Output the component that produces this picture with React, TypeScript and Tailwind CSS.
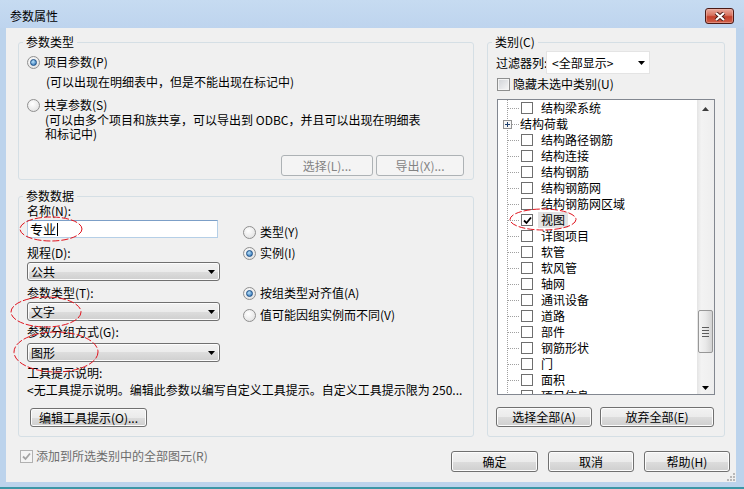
import type { ReactNode } from "react";

const btnFace =
  "rounded-[3px] border border-[#707070] bg-[linear-gradient(#f2f2f2_0%,#ebebeb_50%,#dddddd_50%,#cfcfcf_100%)] shadow-[inset_0_0_0_1px_#fcfcfc]";

function DownArrow() {
  return (
    <svg width="7" height="4" viewBox="0 0 7 4">
      <polygon points="0,0 7,0 3.5,4" fill="#000" />
    </svg>
  );
}

function Btn({
  children,
  w,
  h = 21,
  disabled,
}: {
  children: ReactNode;
  w: string;
  h?: number;
  disabled?: boolean;
}) {
  return (
    <div
      className={`flex items-center justify-center whitespace-nowrap ${w} ${
        h === 21 ? "h-[21px]" : h === 20 ? "h-[20px]" : "h-[19px]"
      } ${
        disabled
          ? "rounded-[3px] border border-[#adb2b5] bg-[#f4f4f4] text-[#838383]"
          : btnFace
      }`}
    >
      {children}
    </div>
  );
}

function Radio({ checked, children }: { checked?: boolean; children: ReactNode }) {
  return (
    <div className="flex h-[16px] items-center gap-[4px] whitespace-nowrap">
      <span className="flex h-[13px] w-[13px] items-center justify-center rounded-full border border-[#8f8f8f] bg-[radial-gradient(circle_at_40%_35%,#ffffff,#dcdcdc)]">
        {checked && (
          <span className="h-[7px] w-[7px] rounded-full border border-[#1c4f86] bg-[radial-gradient(circle_at_40%_35%,#b8e2fb,#1d64ad)]" />
        )}
      </span>
      <span>{children}</span>
    </div>
  );
}

function Combo({ value, mt }: { value: string; mt: string }) {
  return (
    <div
      className={`${mt} flex h-[19px] w-[193px] items-center justify-between pl-[3px] pr-[4px] ${btnFace}`}
    >
      <span className="leading-[15px]">{value}</span>
      <DownArrow />
    </div>
  );
}

function Check({ on, disabled }: { on?: boolean; disabled?: boolean }) {
  return (
    <span
      className={`flex h-[13px] w-[13px] items-center justify-center border ${
        disabled
          ? "border-[#b1b1b1] bg-[#f4f4f4]"
          : "border-[#8e8f8f] bg-[linear-gradient(135deg,#cfd2d6,#f7f7f7)] shadow-[inset_0_0_0_1px_#f4f4f4]"
      }`}
    >
      {on && (
        <svg width="9" height="9" viewBox="0 0 9 9">
          <path d="M1 4.5 L3.5 7 L8 1.5" fill="none" stroke={disabled ? "#a3a3a3" : "#000"} strokeWidth="1.8" />
        </svg>
      )}
    </span>
  );
}

type Item = { label: string; plus?: boolean; on?: boolean; sel?: boolean };

const items: Item[] = [
  { label: "结构梁系统" },
  { label: "结构荷载", plus: true },
  { label: "结构路径钢筋" },
  { label: "结构连接" },
  { label: "结构钢筋" },
  { label: "结构钢筋网" },
  { label: "结构钢筋网区域" },
  { label: "视图", on: true, sel: true },
  { label: "详图项目" },
  { label: "软管" },
  { label: "软风管" },
  { label: "轴网" },
  { label: "通讯设备" },
  { label: "道路" },
  { label: "部件" },
  { label: "钢筋形状" },
  { label: "门" },
  { label: "面积" },
  { label: "项目信息" },
];

function TreeRow({ item }: { item: Item }) {
  return (
    <div className="flex h-[16px] shrink-0 items-center whitespace-nowrap">
      <svg width="22" height="16" viewBox="0 0 22 16" className="shrink-0">
        <line x1="9.5" y1="0" x2="9.5" y2="16" stroke="#a0a0a0" strokeDasharray="1 1" />
        {item.plus ? (
          <>
            <rect x="5.5" y="4.5" width="8" height="8" fill="#f6f6f6" stroke="#919191" />
            <line x1="7" y1="8.5" x2="12" y2="8.5" stroke="#1d3f6e" />
            <line x1="9.5" y1="6" x2="9.5" y2="11" stroke="#1d3f6e" />
            <line x1="14" y1="8.5" x2="22" y2="8.5" stroke="#a0a0a0" strokeDasharray="1 1" />
          </>
        ) : (
          <line x1="10" y1="8.5" x2="22" y2="8.5" stroke="#a0a0a0" strokeDasharray="1 1" />
        )}
      </svg>
      {item.plus ? (
        <span>{item.label}</span>
      ) : (
        <>
          <span className="ml-[1px] flex h-[12px] w-[12px] items-center justify-center border border-[#6f6f6f] bg-white">
            {item.on && (
              <svg width="9" height="9" viewBox="0 0 9 9">
                <path d="M1 4.5 L3.5 7 L8 1.5" fill="none" stroke="#000" strokeWidth="1.8" />
              </svg>
            )}
          </span>
          <span className={`ml-[5px] h-full px-[3px] ${item.sel ? "bg-[#e3e3e3]" : ""}`}>
            {item.label}
          </span>
        </>
      )}
    </div>
  );
}

function Scrollbar() {
  return (
    <div className="flex w-[17px] shrink-0 flex-col bg-[linear-gradient(to_right,#e4e4e4,#f3f3f3_25%,#eeeeee)]">
      <div className="flex h-[17px] items-center justify-center">
        <svg width="7" height="4" viewBox="0 0 7 4">
          <polygon points="0,4 7,4 3.5,0" fill="#3c3c3c" />
        </svg>
      </div>
      <div className="flex-1">
        <div className="mx-[1px] mt-[193px] flex h-[43px] flex-col items-center justify-center gap-[2px] rounded-[2px] border border-[#979797] bg-[linear-gradient(to_right,#f4f4f4,#e9e9e9_50%,#d3d3d3)]">
          <span className="h-[1px] w-[7px] bg-[#5c5c5c]" />
          <span className="h-[1px] w-[7px] bg-[#5c5c5c]" />
          <span className="h-[1px] w-[7px] bg-[#5c5c5c]" />
          <span className="h-[1px] w-[7px] bg-[#5c5c5c]" />
        </div>
      </div>
      <div className="flex h-[17px] items-center justify-center pt-[4px]">
        <DownArrow />
      </div>
    </div>
  );
}

export default function App() {
  return (
    <div className="relative h-[489px] w-[744px] overflow-hidden bg-[#bcd3ec] font-['Noto_Sans_CJK_SC','Noto_Sans',sans-serif] text-[12px] leading-[16px] text-black">
      {/* title bar */}
      <div className="flex h-[28px] items-center justify-between bg-[linear-gradient(#c6dbf1,#bed4ee)] pl-[10px] pr-[10px]">
        <span className="pt-[4px]">参数属性</span>
        <div className="mt-[4px] flex h-[16px] w-[29px] items-center justify-center rounded-[3px] border border-[#4a1a16] bg-[linear-gradient(#e9a99c_0%,#d7725f_45%,#c4402b_55%,#d0604a_100%)] shadow-[inset_0_0_0_1px_#f0b9ae80]">
          <svg width="12" height="9" viewBox="0 0 12 9">
            <path d="M2 1 L10 8 M10 1 L2 8" stroke="#4a1a16" strokeWidth="4" />
            <path d="M2 1 L10 8 M10 1 L2 8" stroke="#fff" strokeWidth="2.2" />
          </svg>
        </div>
      </div>

      {/* client area */}
      <div className="relative ml-[6px] mr-[8px] h-[454px] bg-[#f0f0f0] pt-[7px]">
        <div className="flex gap-[13px] pl-[12px] pr-[11px]">
          {/* left column */}
          <div className="flex w-[456px] flex-col">
            <fieldset className="h-[145px] rounded-[3px] border border-[#d5dfe5]">
              <legend className="ml-[4px] px-[3px] leading-[14px]">参数类型</legend>
              <div className="mt-[5px] pl-[8px]">
                <Radio checked>项目参数(P)</Radio>
              </div>
              <div className="mt-[4px] h-[16px] pl-[27px]">(可以出现在明细表中，但是不能出现在标记中)</div>
              <div className="mt-[7px] pl-[8px]">
                <Radio>共享参数(S)</Radio>
              </div>
              <div className="pl-[26px] leading-[14px]">
                <div>(可以由多个项目和族共享，可以导出到 ODBC，并且可以出现在明细表</div>
                <div>和标记中)</div>
              </div>
              <div className="mt-[14px] flex justify-end gap-[3px] pr-[9px]">
                <Btn w="w-[92px]" disabled>
                  选择(L)...
                </Btn>
                <Btn w="w-[88px]" disabled>
                  导出(X)...
                </Btn>
              </div>
            </fieldset>

            <fieldset className="mt-[9px] h-[248px] rounded-[3px] border border-[#d5dfe5]">
              <legend className="ml-[4px] px-[3px] leading-[14px]">参数数据</legend>
              <div className="flex pl-[8px]">
                <div className="w-[193px]">
                  <div className="h-[16px]">名称(N):</div>
                  <div className="mt-[1px] flex h-[18px] w-[191px] items-center border border-[#b5cfe7] border-t-[#7c9fc7] bg-white pl-[2px] text-[13px]">
                    <span className="leading-[16px]">专业</span>
                    <span className="ml-[1px] h-[13px] w-[1px] bg-black" />
                  </div>
                  <div className="mt-[7px] h-[16px]">规程(D):</div>
                  <Combo value="公共" mt="mt-[1px]" />
                  <div className="mt-[4px] h-[16px]">参数类型(T):</div>
                  <Combo value="文字" mt="mt-[1px]" />
                  <div className="mt-[3px] h-[16px]">参数分组方式(G):</div>
                  <Combo value="图形" mt="mt-[3px]" />
                </div>
                <div className="ml-[23px]">
                  <div className="mt-[21px]">
                    <Radio>类型(Y)</Radio>
                  </div>
                  <div className="mt-[5px]">
                    <Radio checked>实例(I)</Radio>
                  </div>
                  <div className="mt-[24px]">
                    <Radio checked>按组类型对齐值(A)</Radio>
                  </div>
                  <div className="mt-[6px]">
                    <Radio>值可能因组实例而不同(V)</Radio>
                  </div>
                </div>
              </div>
              <div className="mt-[3px] h-[16px] pl-[8px]">工具提示说明:</div>
              <div className="mt-[1px] h-[16px] whitespace-nowrap pl-[8px]">
                &lt;无工具提示说明。编辑此参数以编写自定义工具提示。自定义工具提示限为 250...
              </div>
              <div className="ml-[11px] mt-[10px] w-[117px]">
                <Btn w="w-[117px]" h={19}>
                  编辑工具提示(O)...
                </Btn>
              </div>
            </fieldset>
          </div>

          {/* right column */}
          <fieldset className="h-[402px] w-[238px] rounded-[3px] border border-[#d5dfe5]">
            <legend className="ml-[4px] px-[3px] leading-[14px]">类别(C)</legend>
            <div className="mt-[2px] flex h-[23px] items-center pl-[8px]">
              <span className="w-[50px] overflow-hidden whitespace-nowrap">过滤器列:</span>
              <div className="flex h-[23px] w-[104px] items-center justify-between border border-[#e4e4e4] bg-white pl-[5px] pr-[4px]">
                <span>&lt;全部显示&gt;</span>
                <DownArrow />
              </div>
            </div>
            <div className="mt-[2px] flex h-[16px] items-center gap-[3px] pl-[9px]">
              <Check />
              <span>隐藏未选中类别(U)</span>
            </div>
            <div className="ml-[9px] mt-[7px] flex h-[296px] w-[218px] border border-[#828790] bg-white">
              <div className="flex flex-1 flex-col overflow-hidden">
                {items.map((it) => (
                  <TreeRow key={it.label} item={it} />
                ))}
              </div>
              <Scrollbar />
            </div>
            <div className="mt-[12px] flex gap-[8px] pl-[8px]">
              <Btn w="w-[96px]" h={20}>
                选择全部(A)
              </Btn>
              <Btn w="w-[114px]" h={20}>
                放弃全部(E)
              </Btn>
            </div>
          </fieldset>
        </div>

        {/* bottom row */}
        <div className="mt-[14px] flex items-start justify-between pl-[14px] pr-[6px]">
          <div className="-mt-[3px] flex h-[16px] items-center gap-[3px] text-[#6d6d6d]">
            <Check on disabled />
            <span>添加到所选类别中的全部图元(R)</span>
          </div>
          <div className="flex gap-[10px]">
            <Btn w="w-[87px]">确定</Btn>
            <Btn w="w-[86px]">取消</Btn>
            <Btn w="w-[86px]">帮助(H)</Btn>
          </div>
        </div>

        {/* size grip */}
        <svg width="8" height="8" viewBox="0 0 8 8" className="absolute bottom-[1px] right-[1px]">
          {[
            [6, 0],
            [6, 3],
            [3, 3],
            [6, 6],
            [3, 6],
            [0, 6],
          ].map(([x, y]) => (
            <rect key={`${x}-${y}`} x={x} y={y} width="2" height="2" fill="#b8b8b8" />
          ))}
        </svg>
      </div>

      {/* bottom frame edge */}
      <div className="h-[7px] border-b-2 border-[#3c96a6]" />

      {/* red annotation marks */}
      <svg width="744" height="489" className="pointer-events-none absolute left-0 top-0">
        <g fill="none" stroke="#e0141e" strokeWidth="1" strokeDasharray="7 2">
          <ellipse cx="51" cy="229" rx="31" ry="12" />
          <ellipse cx="46" cy="312" rx="35" ry="15" />
          <ellipse cx="56" cy="352" rx="42" ry="20" />
          <ellipse cx="543" cy="219.5" rx="33" ry="10.5" />
        </g>
      </svg>
    </div>
  );
}
